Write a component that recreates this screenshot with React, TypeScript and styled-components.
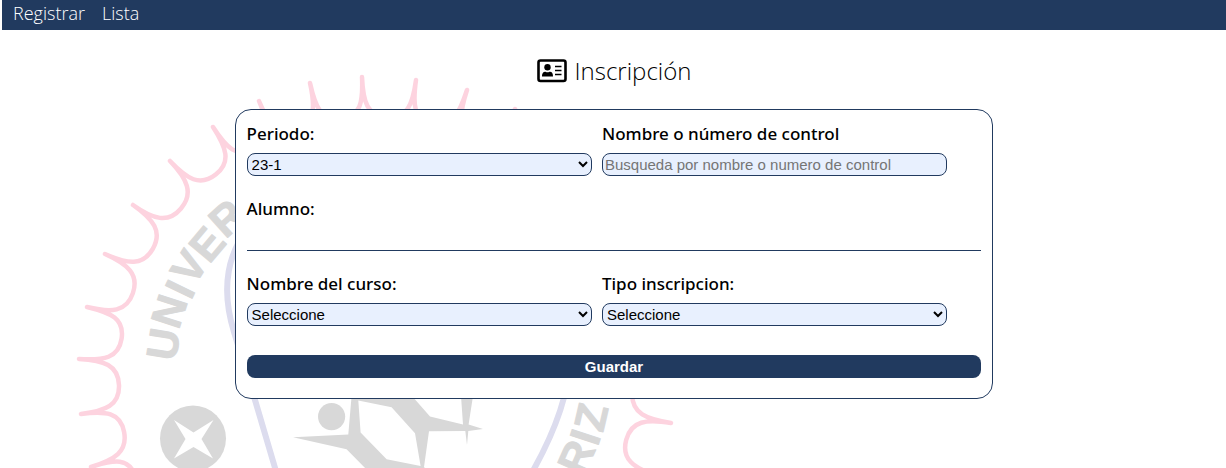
import React from "react";
import styled, { createGlobalStyle } from "styled-components";

const NAVY = "#213a5f";

const GlobalStyle = createGlobalStyle`
  * { box-sizing: border-box; }
  body {
    margin: 0;
    background: #fff;
    color: #000;
    font-family: "Open Sans", "Noto Sans", sans-serif;
  }
`;

const Page = styled.div`
  position: relative;
  min-height: 100vh;
  padding-left: 2px;
  overflow: hidden;
`;

const Seal = styled.svg`
  position: absolute;
  left: 0;
  top: 0;
  width: 700px;
  height: 100%;
`;

const NavBar = styled.nav`
  position: relative;
  display: flex;
  gap: 17px;
  height: 30px;
  padding: 0 11px;
  background: ${NAVY};
`;

const NavLink = styled.a`
  color: #fff;
  font-size: 18px;
  font-weight: 300;
  line-height: 27px;
  text-decoration: none;
`;

const Main = styled.main`
  position: relative;
  display: flex;
  flex-direction: column;
  align-items: center;
`;

const Title = styled.h1`
  display: flex;
  align-items: center;
  gap: 8px;
  margin: 24px 0 21px;
  font-size: 24px;
  font-weight: 300;
  line-height: 34px;
`;

const Card = styled.form`
  width: 62%;
  padding: 11px 11px 20px;
  border: 1px solid ${NAVY};
  border-radius: 16px;
  background: #fff;
`;

const Row = styled.div`
  display: flex;
  gap: 10px;
`;

const Field = styled.div`
  display: flex;
  flex-direction: column;
  gap: 6px;
  width: 47%;
`;

const Label = styled.label`
  font-family: "Noto Sans", "Open Sans", sans-serif;
  font-size: 17px;
  font-weight: 500;
  line-height: 26px;
`;

const Select = styled.select`
  width: 100%;
  height: 23px;
  border: 1px solid ${NAVY};
  border-radius: 8px;
  background: #e8f0fe;
  color: #000;
  font: 15px "Liberation Sans", Arial, sans-serif;
`;

const Input = styled.input`
  width: 100%;
  height: 23px;
  padding: 1px 2px;
  border: 1px solid ${NAVY};
  border-radius: 8px;
  background: #e8f0fe;
  font: 15px "Liberation Sans", Arial, sans-serif;
  &::placeholder { color: #757575; }
`;

const Student = styled.div`
  height: 55px;
  margin: 20px 0;
  border-bottom: 1px solid ${NAVY};
  font-family: "Noto Sans", "Open Sans", sans-serif;
  font-size: 17px;
  font-weight: 500;
  line-height: 26px;
`;

const SaveButton = styled.button`
  display: block;
  width: 100%;
  height: 23px;
  margin-top: 29px;
  padding: 0;
  border: 0;
  border-radius: 8px;
  background: ${NAVY};
  color: #fff;
  font: bold 15px "Liberation Sans", Arial, sans-serif;
`;

const CENTER = { x: 375, y: 376 };

type Point = [number, number];

const LEFT_TIPS: Point[] = [
  [108, 516], [91, 467], [81, 414], [79, 359], [87, 307], [105, 254], [133, 205], [170, 161],
  [213, 127], [259, 101], [310, 83], [362, 77], [416, 80], [467, 90], [515, 109],
];
const RIGHT_TIPS: Point[] = [[671, 370], [671, 423], [657, 476]];

// Moves a point by the given distance in the direction of a target.
function toward(from: Point, target: Point, distance: number): Point {
  const dx = target[0] - from[0];
  const dy = target[1] - from[1];
  const length = Math.hypot(dx, dy);
  return [from[0] + (dx / length) * distance, from[1] + (dy / length) * distance];
}

const fmt = (p: Point) => `${p[0].toFixed(1)} ${p[1].toFixed(1)}`;

function scallops(tips: Point[]) {
  const center: Point = [CENTER.x, CENTER.y];
  let d = `M${fmt(tips[0])}`;
  for (let i = 1; i < tips.length; i++) {
    const a = tips[i - 1];
    const b = tips[i];
    const chord = Math.hypot(b[0] - a[0], b[1] - a[1]);
    const trough = toward([(a[0] + b[0]) / 2, (a[1] + b[1]) / 2], center, 39);
    const along: Point = [((b[0] - a[0]) / chord) * 20, ((b[1] - a[1]) / chord) * 20];
    const before: Point = [trough[0] - along[0], trough[1] - along[1]];
    const after: Point = [trough[0] + along[0], trough[1] + along[1]];
    d += `C${fmt(toward(a, center, 25))} ${fmt(before)} ${fmt(trough)}`;
    d += `C${fmt(after)} ${fmt(toward(b, center, 25))} ${fmt(b)}`;
  }
  return d;
}

const LETTERS: [string, number, number, number][] = [
  ["U", 163, 344, -81],
  ["N", 169, 311, -72],
  ["I", 180, 289, -64],
  ["V", 189, 267, -58],
  ["E", 207, 244, -50],
  ["R", 227, 218, -42],
  ["O", 561, 486, -60],
  ["R", 576, 457, -66],
  ["I", 585, 437, -72],
  ["Z", 591, 417, -77],
];

function SealArt() {
  return (
    <Seal aria-hidden="true">
      <g fill="none" stroke="#fdd3df" strokeWidth="4.500" strokeLinejoin="round" strokeLinecap="round">
        <path d={scallops(LEFT_TIPS)} />
        <path d={scallops(RIGHT_TIPS)} />
      </g>
      <path
        d="M250 225C226 255 221 290 234 332L255 400L278 478M570 360Q568 410 530 476"
        fill="none"
        stroke="#dcdcee"
        strokeWidth="6"
      />
      <g
        fill="#d8d8d8"
        stroke="#d8d8d8"
        strokeLinejoin="round"
        fontFamily="Liberation Sans, Arial, sans-serif"
        fontWeight="bold"
        fontSize="43"
        textAnchor="middle"
      >
        {LETTERS.map(([ch, x, y, turn]) => (
          <text key={ch + y} transform={`translate(${x} ${y}) rotate(${turn})`} y="15">
            {ch}
          </text>
        ))}
      </g>
      <circle cx="193" cy="438.500" r="33" fill="#d8d8d8" />
      <path d="M174 420L193.500 432.500L213.500 420L201.500 439L213 458.500L193.500 447L174 458.500L185.500 439Z" fill="#fff" />
      <g fill="#d8d8d8">
        <circle cx="331.600" cy="416.600" r="13.600" />
        <path
          fillRule="evenodd"
          d="M351.600 396L412 396L430 416.600L463 424.500L461 396L473 396L468.600 424.500L483 429L468.300 431L467 445L465.300 431L429 431.300L424 467L428 472L369 472L346.600 449.300L293 437.300L348.300 434.600ZM358.300 400.600L391.600 407.300L415 433.300L420.600 466L386.600 459.300L360.600 432.600Z"
        />
      </g>
    </Seal>
  );
}

function IdCardIcon() {
  return (
    <svg width="30" height="26" viewBox="0 0 30 26" aria-hidden="true">
      <rect x="1.500" y="2.500" width="27" height="20.500" rx="2" fill="#fff" stroke="#000" strokeWidth="2.600" />
      <circle cx="10.500" cy="9.300" r="3.200" />
      <path d="M5 18.600C5 15 6.500 13.800 8.500 13.800Q10.500 14.800 12.500 13.800C14.800 13.800 16 15 16 18.600Z" />
      <path d="M18 8.500H24.500M18 12.500H24.500M18 16.500H24.500" stroke="#000" strokeWidth="1.600" />
    </svg>
  );
}

export default function App() {
  return (
    <>
      <GlobalStyle />
      <Page>
        <SealArt />
        <NavBar>
          <NavLink href="#registrar">Registrar</NavLink>
          <NavLink href="#lista">Lista</NavLink>
        </NavBar>
        <Main>
          <Title>
            <IdCardIcon />
            Inscripción
          </Title>
          <Card>
            <Row>
              <Field>
                <Label htmlFor="periodo">Periodo:</Label>
                <Select id="periodo">
                  <option>23-1</option>
                </Select>
              </Field>
              <Field>
                <Label htmlFor="control">Nombre o número de control</Label>
                <Input id="control" placeholder="Busqueda por nombre o numero de control" />
              </Field>
            </Row>
            <Student>Alumno:</Student>
            <Row>
              <Field>
                <Label htmlFor="curso">Nombre del curso:</Label>
                <Select id="curso">
                  <option>Seleccione</option>
                </Select>
              </Field>
              <Field>
                <Label htmlFor="tipo">Tipo inscripcion:</Label>
                <Select id="tipo">
                  <option>Seleccione</option>
                </Select>
              </Field>
            </Row>
            <SaveButton type="button">Guardar</SaveButton>
          </Card>
        </Main>
      </Page>
    </>
  );
}
